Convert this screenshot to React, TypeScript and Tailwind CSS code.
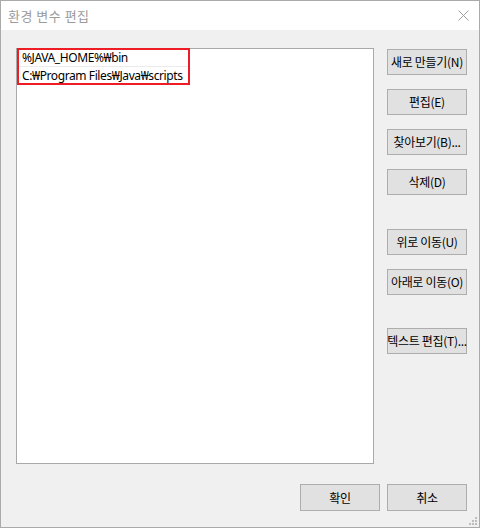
import React from "react";

const kr = { fontFamily: '"Noto Sans CJK KR", "Noto Sans", sans-serif' };
const lat = { fontFamily: '"Noto Sans", "Noto Sans CJK KR", sans-serif' };

function Btn({ children, w = "w-[80px]", h = "h-[26px]" }: { children: React.ReactNode; w?: string; h?: string }) {
  return (
    <div
      className={`${w} ${h} shrink-0 bg-[#e1e1e1] border border-[#adadad] flex items-center justify-center text-[12px] tracking-[-0.3px] text-black leading-none whitespace-nowrap`}
      style={kr}
    >
      {children}
    </div>
  );
}

export default function App() {
  return (
    <div className="w-[480px] h-[528px] border border-[#aaaaaa] flex flex-col bg-[#f0f0f0] relative overflow-hidden">
      <div className="h-[29px] bg-white flex items-center justify-between pl-[7px] pr-[10px] shrink-0">
        <span className="text-[13px] text-[#9b9b9b] tracking-[0.5px]" style={kr}>
          환경 변수 편집
        </span>
        <svg width="11" height="11" viewBox="0 0 11 11">
          <path d="M0.5 0.5 L10.5 10.5 M10.5 0.5 L0.5 10.5" stroke="#a0a0a0" strokeWidth="1" fill="none" />
        </svg>
      </div>
      <div className="flex-1 flex flex-col pt-[18px] pl-[15px] pr-[11px] pb-[16px]">
        <div className="flex gap-[13px]">
          <div className="relative w-[358px] h-[416px] bg-white border border-[#a9a9a9] shrink-0">
            <div className="pt-[1px]">
              <div className="h-[17px] w-[170px] ml-[1px] border-b border-[#ebebeb] flex items-center pl-[4px] text-[12px] tracking-[-0.4px] text-black" style={lat}>
                %JAVA_HOME%₩bin
              </div>
              <div className="h-[18px] flex items-center pl-[5px] text-[12px] tracking-[-0.4px] text-black" style={lat}>
                C:₩Program Files₩Java₩scripts
              </div>
            </div>
            <div className="absolute left-[0px] top-[-1px] w-[173px] h-[37px] border-2 border-[#ee1c24]" />
          </div>
          <div className="flex flex-col pt-[1px]">
            <div className="flex flex-col gap-[14px]">
              <Btn>새로 만들기(N)</Btn>
              <Btn>편집(E)</Btn>
              <Btn>찾아보기(B)...</Btn>
              <Btn>삭제(D)</Btn>
            </div>
            <div className="flex flex-col gap-[14px] mt-[34px]">
              <Btn>위로 이동(U)</Btn>
              <Btn>아래로 이동(O)</Btn>
            </div>
            <div className="mt-[33px]">
              <Btn>텍스트 편집(T)...</Btn>
            </div>
          </div>
        </div>
        <div className="flex justify-end gap-[7px] mt-[20px] pr-[1px]">
          <Btn w="w-[80px]" h="h-[27px]">확인</Btn>
          <Btn w="w-[80px]" h="h-[27px]">취소</Btn>
        </div>
      </div>
      <svg className="absolute right-[1px] bottom-[1px]" width="9" height="9" viewBox="0 0 9 9">
        <rect x="6" y="0" width="2" height="2" fill="#bcbcbc" />
        <rect x="3" y="3" width="2" height="2" fill="#bcbcbc" />
        <rect x="6" y="3" width="2" height="2" fill="#bcbcbc" />
        <rect x="0" y="6" width="2" height="2" fill="#bcbcbc" />
        <rect x="3" y="6" width="2" height="2" fill="#bcbcbc" />
        <rect x="6" y="6" width="2" height="2" fill="#bcbcbc" />
      </svg>
    </div>
  );
}
